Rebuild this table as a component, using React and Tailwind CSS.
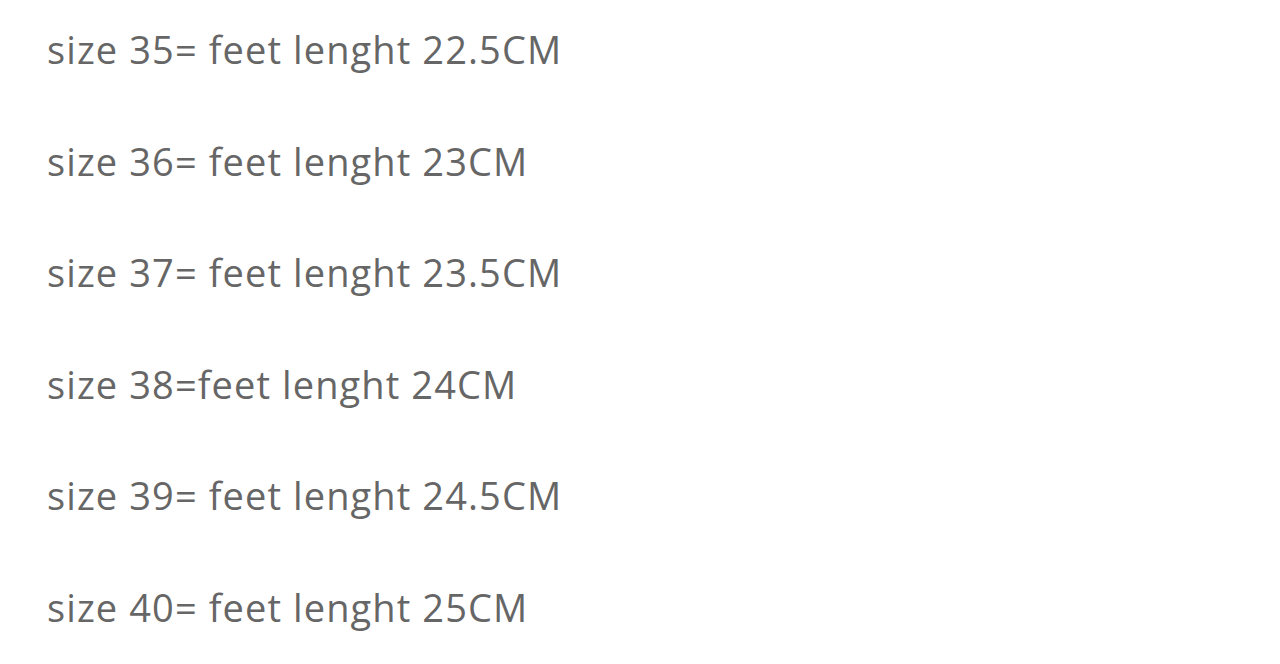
const ROWS = [
  "size 35= feet lenght 22.5CM",
  "size 36= feet lenght 23CM",
  "size 37= feet lenght 23.5CM",
  "size 38=feet lenght 24CM",
  "size 39= feet lenght 24.5CM",
  "size 40= feet lenght 25CM",
];

export default function App() {
  return (
    <div className="w-[1280px] h-[664px] bg-white overflow-hidden pl-[47px]">
      <div className="flex flex-col mt-[-6px]">
        {ROWS.map((r) => (
          <p
            key={r}
            className="h-[111.5px] flex items-center text-[38px] text-[#666666] tracking-[1.1px] font-['Open_Sans',sans-serif]"
          >
            {r}
          </p>
        ))}
      </div>
    </div>
  );
}
